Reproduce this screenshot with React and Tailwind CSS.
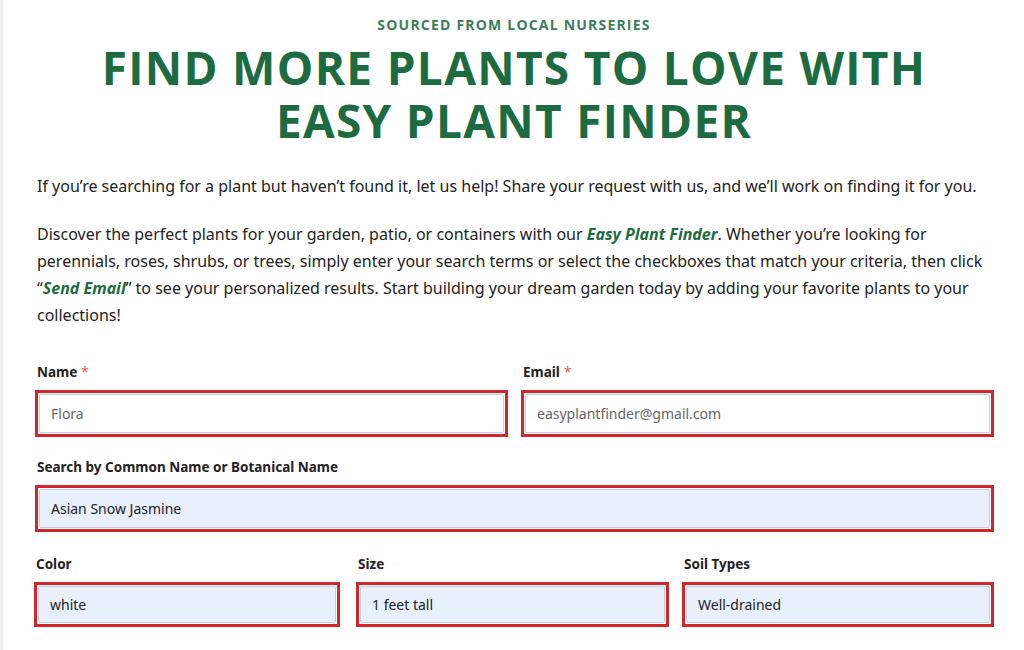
import React from "react";

function Field({ label, required, value, autofill, className = "", h = "h-[47px]" }) {
  return (
    <div className={"flex flex-col " + className}>
      <div className="pl-[2px] text-[13.5px] font-bold text-[#222] mb-[9px] leading-[18px]">
        {label}
        {required && <span className="text-[#d9534f] font-normal ml-[4px]">*</span>}
      </div>
      <div className={"shrink-0 border-[3px] border-[#d3262c] p-[1px] " + h}>
        <div
          className={
            "h-full w-full flex items-center px-[11px] text-[14px] border rounded-[2px] " +
            (autofill
              ? "bg-[#e8f0fe] border-[#c9ccd6] text-[#222]"
              : "bg-white border-[#cfcfcf] text-[#666]")
          }
        >
          {value}
        </div>
      </div>
    </div>
  );
}

export default function App() {
  return (
    <div
      className="w-[1024px] h-[650px] bg-white overflow-hidden border-l-[3px] border-[#f0f0f0]"
      style={{ fontFamily: '"Noto Sans", "Open Sans", sans-serif' }}
    >
      <div className="pl-[31px] pr-[30px]">
        <div
          className="text-center pt-[16px] text-[14px] font-bold tracking-[1.2px] text-[#3d7d5c] leading-[18px]"
          style={{ fontFamily: '"Open Sans", sans-serif' }}
        >
          SOURCED FROM LOCAL NURSERIES
        </div>
        <h1
          className="text-center mt-[7px] text-[46px] font-bold leading-[53px] tracking-[1.3px] text-[#1d6b40]"
          style={{ fontFamily: '"Open Sans", sans-serif' }}
        >
          FIND MORE PLANTS TO LOVE WITH
          <br />
          EASY PLANT FINDER
        </h1>
        <p className="pl-[3px] mt-[26px] text-[16px] leading-[27px] text-[#222]">
          If you’re searching for a plant but haven’t found it, let us help! Share your request with us, and we’ll work on finding it for you.
        </p>
        <p className="pl-[3px] mt-[21px] text-[16px] leading-[27px] text-[#222]">
          Discover the perfect plants for your garden, patio, or containers with our{" "}
          <b className="italic text-[#1d6b40]">Easy Plant Finder</b>. Whether you’re looking for perennials, roses, shrubs, or trees, simply enter your search terms or select the checkboxes that match your criteria, then click “
          <b className="italic text-[#1d6b40]">Send Email</b>” to see your personalized results. Start building your dream garden today by adding your favorite plants to your collections!
        </p>
        <div className="pl-[1px] mt-[34px] flex gap-[13px]">
          <Field className="flex-1" label="Name" required value="Flora" />
          <Field className="flex-1" label="Email" required value="easyplantfinder@gmail.com" />
        </div>
        <div className="pl-[1px] mt-[21px]">
          <Field label="Search by Common Name or Botanical Name" value="Asian Snow Jasmine" autofill />
        </div>
        <div className="mt-[23px] flex">
          <Field className="w-[306px]" label="Color" value="white" autofill h="h-[45px]" />
          <Field className="w-[313px] ml-[16px]" label="Size" value="1 feet tall" autofill h="h-[45px]" />
          <Field className="flex-1 ml-[13px]" label="Soil Types" value="Well-drained" autofill h="h-[45px]" />
        </div>
      </div>
    </div>
  );
}
